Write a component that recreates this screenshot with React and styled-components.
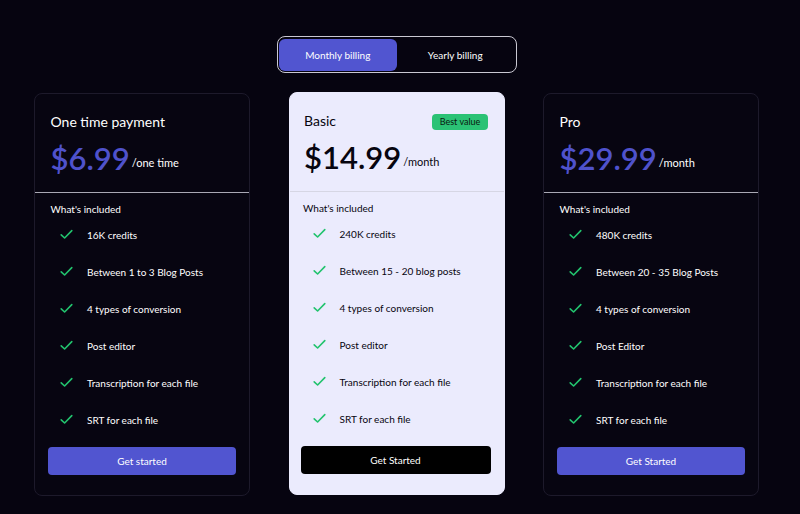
import React from 'react';
import styled, { createGlobalStyle } from 'styled-components';

const GlobalStyle = createGlobalStyle`
  html, body {
    margin: 0;
    padding: 0;
    background: #060410;
  }
  body {
    font-family: Lato, "Noto Sans", sans-serif;
    color: #ffffff;
  }
`;

const plans = [
  {
    name: 'One time payment',
    price: '$6.99',
    period: '/one time',
    features: ['16K credits', 'Between 1 to 3 Blog Posts', '4 types of conversion', 'Post editor', 'Transcription for each file', 'SRT for each file'],
    cta: 'Get started',
  },
  {
    name: 'Basic',
    price: '$14.99',
    period: '/month',
    badge: 'Best value',
    light: true,
    features: ['240K credits', 'Between 15 - 20 blog posts', '4 types of conversion', 'Post editor', 'Transcription for each file', 'SRT for each file'],
    cta: 'Get Started',
  },
  {
    name: 'Pro',
    price: '$29.99',
    period: '/month',
    features: ['480K credits', 'Between 20 - 35 Blog Posts', '4 types of conversion', 'Post Editor', 'Transcription for each file', 'SRT for each file'],
    cta: 'Get Started',
  },
];

const Check = () => (
  <svg width="13" height="11" viewBox="0 0 13 11" fill="none">
    <path d="M1.2 5.8 L4.6 9 L11.8 1.6" stroke="#22c36e" strokeWidth="1.6" strokeLinecap="round" strokeLinejoin="round" />
  </svg>
);

const App = () => {
  return (
    <Page>
      <GlobalStyle />
      <Toggle>
        <ToggleButton active>Monthly billing</ToggleButton>
        <ToggleButton>Yearly billing</ToggleButton>
      </Toggle>
      <Cards>
        {plans.map((p) => (
          <Card key={p.name} light={p.light}>
            <Head light={p.light}>
              <TitleRow>
                <Title>{p.name}</Title>
                {p.badge && <Badge>{p.badge}</Badge>}
              </TitleRow>
              <PriceRow>
                <Price light={p.light}>{p.price}</Price>
                <Period>{p.period}</Period>
              </PriceRow>
            </Head>
            <Divider light={p.light} />
            <Body light={p.light}>
              <Included>What's included</Included>
              <Features>
                {p.features.map((f) => (
                  <Feature key={f}>
                    <Check />
                    <span>{f}</span>
                  </Feature>
                ))}
              </Features>
              <CtaButton light={p.light}>{p.cta}</CtaButton>
            </Body>
          </Card>
        ))}
      </Cards>
    </Page>
  );
};

const Page = styled.div`
  width: 800px;
  height: 514px;
  box-sizing: border-box;
  padding: 36px 7px 0 0;
  display: flex;
  flex-direction: column;
  align-items: center;
  overflow: hidden;
`;

const Toggle = styled.div`
  width: 240px;
  height: 37px;
  box-sizing: border-box;
  border: 1.5px solid #c9c8d2;
  border-radius: 8px;
  padding: 1.5px;
  display: flex;
`;

const ToggleButton = styled.div`
  flex: 1;
  display: flex;
  align-items: center;
  justify-content: center;
  border-radius: 6px;
  font-size: 10px;
  color: #ffffff;
  background: ${(p) => (p.active ? '#5155d0' : 'transparent')};
`;

const Cards = styled.div`
  margin-top: 20px;
  display: flex;
  gap: 38.5px;
  align-items: flex-start;
`;

const Card = styled.div`
  width: 216px;
  height: 403px;
  box-sizing: border-box;
  border: 1.5px solid ${(p) => (p.light ? '#ebebfd' : '#1d1a2b')};
  border-radius: 8px;
  background: ${(p) => (p.light ? '#ebebfd' : '#070511')};
  color: ${(p) => (p.light ? '#07050f' : '#ffffff')};
  padding-top: 19px;
  margin-top: ${(p) => (p.light ? '-1px' : '0')};
  display: flex;
  flex-direction: column;
`;

const Head = styled.div`
  padding: 0 15.5px 0 ${(p) => (p.light ? '14.5px' : '15.5px')};
  height: 79px;
`;

const TitleRow = styled.div`
  display: flex;
  align-items: center;
  justify-content: space-between;
  height: 18px;
`;

const Title = styled.div`
  font-size: 14px;
  line-height: 18px;
`;

const Badge = styled.div`
  background: #2bc275;
  color: #0a1a10;
  font-size: 9px;
  border-radius: 4px;
  width: 56px;
  height: 16px;
  display: flex;
  align-items: center;
  justify-content: center;
  margin-top: 1px;
`;

const PriceRow = styled.div`
  margin-top: 8px;
  display: flex;
  align-items: center;
  gap: 2px;
`;

const Price = styled.div`
  font-size: 31px;
  line-height: 38px;
  font-weight: 600;
  color: ${(p) => (p.light ? '#07050f' : '#4f52cc')};
`;

const Period = styled.div`
  font-size: 11px;
  padding-top: 9px;
`;

const Divider = styled.div`
  height: 1px;
  background: ${(p) => (p.light ? '#d6d6e4' : '#a9a8b4')};
`;

const Body = styled.div`
  padding: 9px 13px 0 ${(p) => (p.light ? '11px' : '13px')};
  display: flex;
  flex-direction: column;
`;

const Included = styled.div`
  font-size: 10px;
  line-height: 14px;
  padding-left: 2.5px;
`;

const Features = styled.div`
  display: flex;
  flex-direction: column;
`;

const Feature = styled.div`
  height: 37px;
  display: flex;
  align-items: center;
  gap: 14px;
  padding-left: 12px;
  font-size: 10px;
`;

const CtaButton = styled.div`
  margin-top: 9px;
  height: 28px;
  border-radius: 4px;
  background: ${(p) => (p.light ? '#000000' : '#5155d0')};
  color: #ffffff;
  font-size: 10px;
  display: flex;
  align-items: center;
  justify-content: center;
`;

export default App;
